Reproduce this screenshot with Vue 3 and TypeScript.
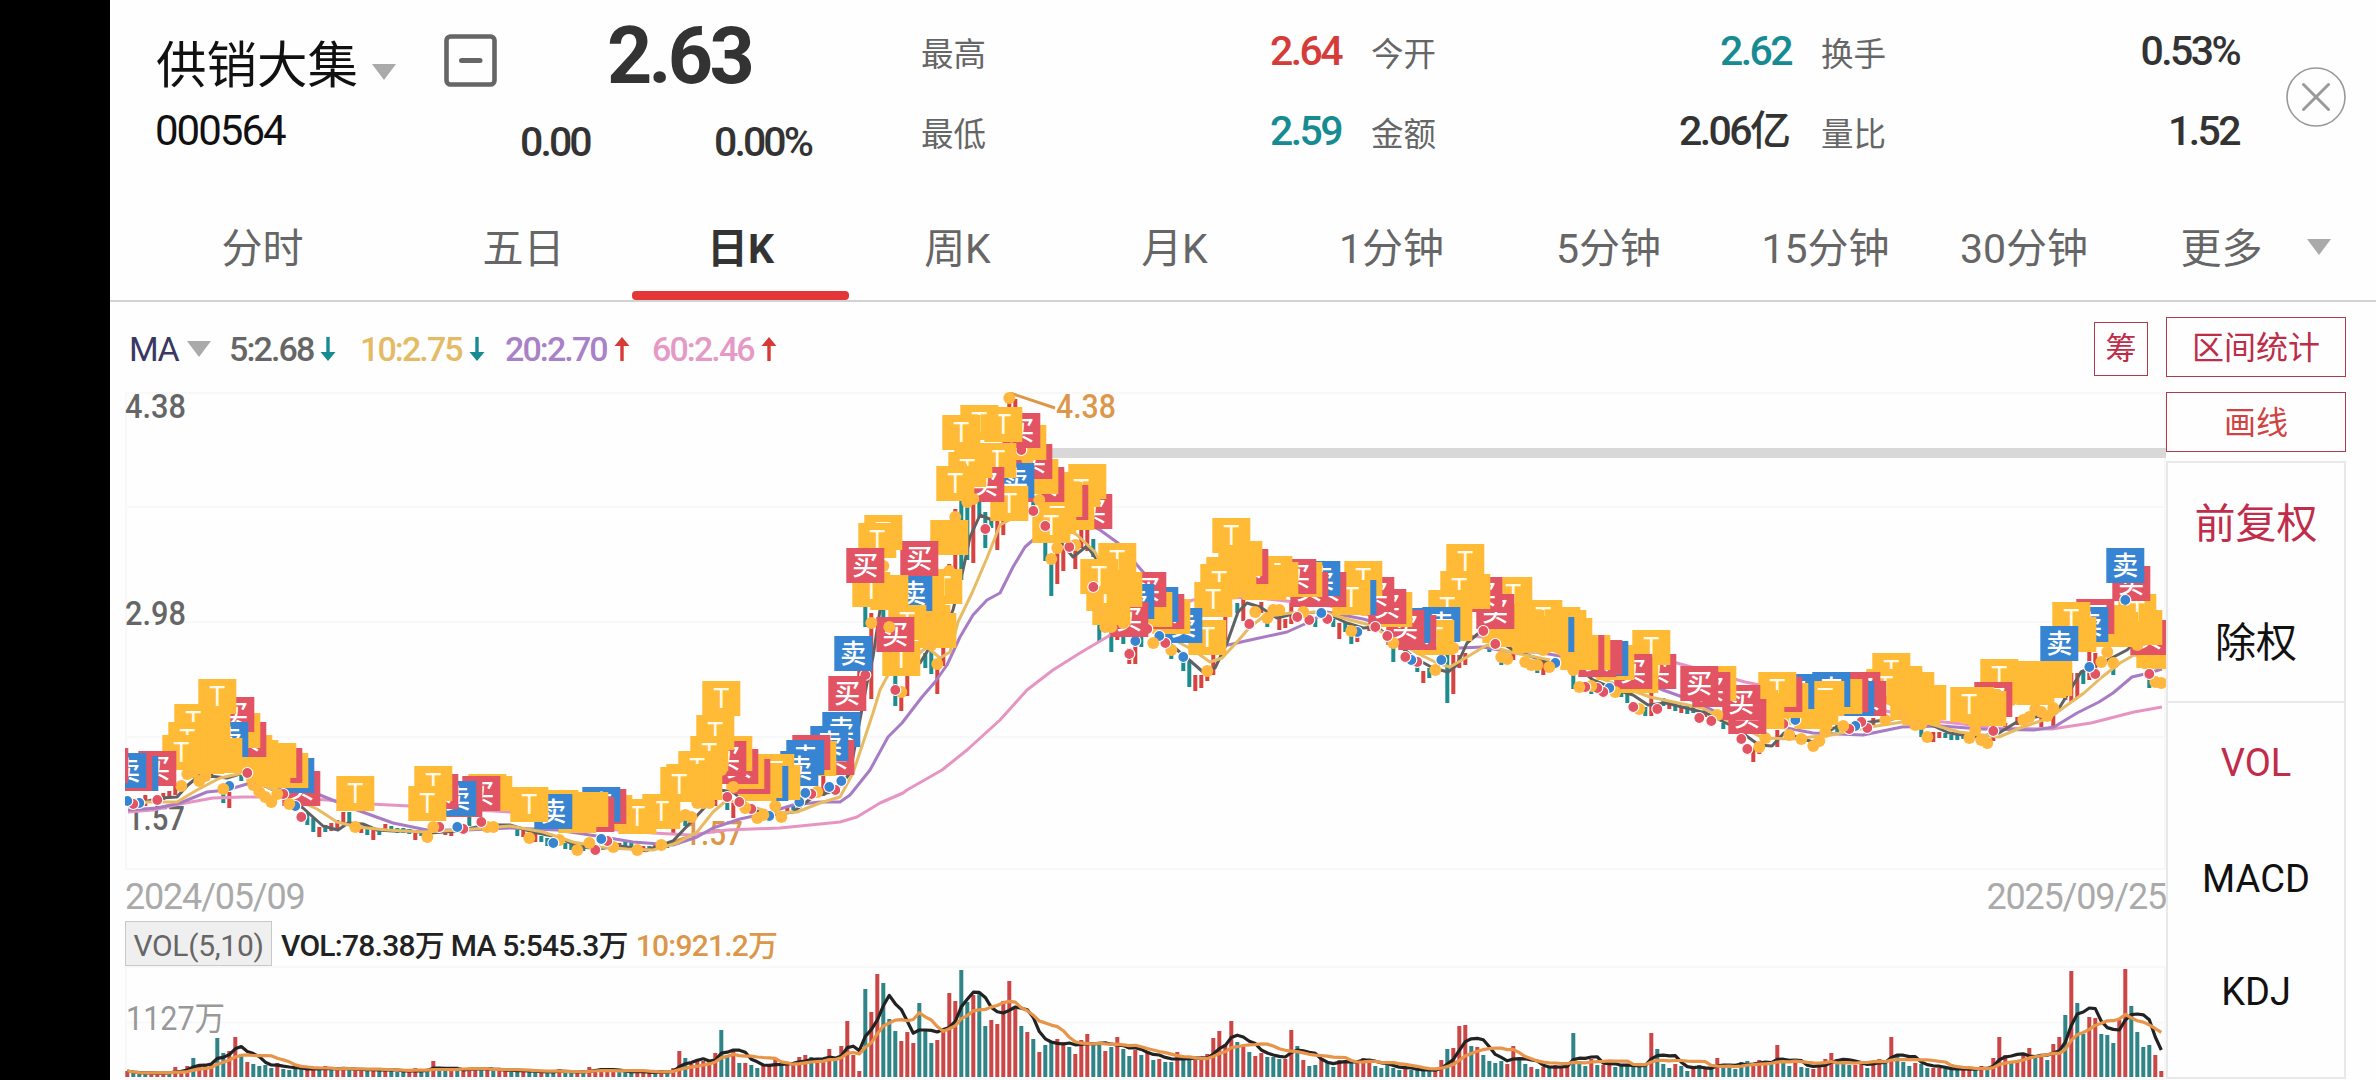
<template>
  <div class="screen">
    <div class="notch"></div>
    <div class="content">
      <header class="quote">
        <div class="stock">
          <div class="stock-name">
            <span>供销大集</span>
            <i class="caret"></i>
          </div>
          <div class="stock-code">000564</div>
        </div>
        <svg class="minus-icon" viewBox="0 0 53 53">
          <rect x="2.5" y="2.5" width="48" height="48" rx="4" fill="none" stroke="#666" stroke-width="4.6" />
          <path d="M17.500 26.500H36" stroke="#666" stroke-width="5" stroke-linecap="round" />
        </svg>
        <div class="price">
          <div class="price-now">2.63</div>
          <div class="price-change">
            <span>0.00</span>
            <span>0.00%</span>
          </div>
        </div>
        <div class="stats">
          <div v-for="item in stats" :key="item.label" class="stat">
            <span class="stat-label">{{ item.label }}</span>
            <span class="stat-value" :class="item.color">{{ item.value }}<b v-if="item.unit">{{ item.unit }}</b></span>
          </div>
        </div>
        <svg class="close-icon" viewBox="0 0 60 60">
          <circle cx="30" cy="30" r="29" fill="none" stroke="#999" stroke-width="1.6" />
          <path d="M17.500 17.500L42.500 42.500M42.500 17.500L17.500 42.500" stroke="#999" stroke-width="3" stroke-linecap="round" />
        </svg>
      </header>

      <nav class="tabs">
        <div
          v-for="tab in tabs"
          :key="tab"
          class="tab"
          :class="{ active: tab === activeTab }"
          @click="activeTab = tab"
        >
          <span>{{ tab }}</span>
        </div>
        <i class="caret more-caret"></i>
      </nav>

      <div class="body">
        <section class="chart">
          <div class="ma-row">
            <span class="ma-name">MA</span>
            <i class="caret"></i>
            <span v-for="ma in maList" :key="ma.text" class="ma" :class="ma.cls">
              {{ ma.text }}
              <svg class="arrow" :class="{ up: ma.up }" viewBox="0 0 16 24">
                <path d="M6.300 0H9.700V15H15.500L8 24L0.500 15H6.300Z" :fill="ma.up ? '#d73a35' : '#168b92'" />
              </svg>
            </span>
            <span class="chip-btn">筹</span>
          </div>

          <svg class="price-svg" viewBox="125 392 2041 478">
            <g stroke="#f8f8f8" stroke-width="2">
              <path v-for="y in [393, 507, 622, 737, 869]" :key="y" :d="`M125 ${y}H2166`" />
              <path d="M126 392V869M2165 392V869" />
            </g>
            <rect x="1030" y="448" width="1136" height="10" fill="#d8d8d8" />
            <g class="axis" fill="#666">
              <text x="125" y="418" textLength="61" lengthAdjust="spacingAndGlyphs">4.38</text>
              <text x="125" y="625" textLength="61" lengthAdjust="spacingAndGlyphs">2.98</text>
              <text x="127" y="830" textLength="58" lengthAdjust="spacingAndGlyphs">1.57</text>
            </g>
            <g class="axis" fill="#dc974a">
              <text x="684" y="845" textLength="59" lengthAdjust="spacingAndGlyphs">1.57</text>
              <text x="1056" y="418" textLength="60" lengthAdjust="spacingAndGlyphs">4.38</text>
            </g>
            <path d="M645 851L688 837M1010 393L1055 408" stroke="#dc974a" stroke-width="3" />
            <!-- candles -->
            <rect
              v-for="c in candles"
              :key="c.n"
              :x="px(c.n) - 2"
              :y="c.top"
              width="4"
              :height="c.bottom - c.top"
              :fill="c.up ? '#d84340' : '#1d8c8f'"
            />
            <g fill="none" stroke-width="3" stroke-linejoin="round">
              <polyline v-for="l in priceLines" :key="l.color" :points="l.points" :stroke="l.color" />
            </g>
            <!-- trade marks: the earlier day lies on top -->
            <g v-for="m in marks" :key="m.n">
              <circle v-if="m.kind === 'T'" :cx="px(m.n)" :cy="m.dot" r="6" fill="#ffb83d" />
              <circle v-else :cx="px(m.n)" :cy="m.dot" r="5.500" :fill="markColor[m.kind]" stroke="#fff" stroke-width="1.200" />
              <rect :x="px(m.n) - 19" :y="m.top" width="38" height="35" :fill="markColor[m.kind]" />
              <template v-if="m.kind === 'T'">
                <text v-if="lettered.has(m.n)" class="mark-t" :x="px(m.n)" :y="m.top + 27">T</text>
              </template>
              <text v-else class="mark-zh" :x="px(m.n)" :y="m.top + 27">{{ m.kind === 'R' ? '买' : '卖' }}</text>
            </g>
          </svg>

          <div class="dates">
            <span>2024/05/09</span>
            <span>2025/09/25</span>
          </div>

          <div class="vol-row">
            <span class="vol-tag">VOL(5,10)</span>
            <span class="vol-text">VOL:78.38万 MA 5:545.3万</span>
            <span class="vol-ten">10:921.2万</span>
          </div>

          <svg class="vol-svg" viewBox="125 966 2041 114">
            <g stroke="#f8f8f8" stroke-width="2">
              <path d="M125 967H2166M125 1022.500H2166M125 1079H2166M126 966V1080M2165 966V1080" />
            </g>
            <text class="vol-axis" x="126" y="1030" textLength="99" lengthAdjust="spacingAndGlyphs">1127万</text>
            <rect
              v-for="(v, i) in volumes"
              :key="i"
              :x="px(i) - 2"
              :y="1077 - v.size"
              width="4"
              :height="v.size"
              :fill="v.up ? '#cb4644' : '#2f8487'"
            />
            <g fill="none" stroke-width="3.200" stroke-linejoin="round">
              <polyline :points="volumeMa(5)" stroke="#222" />
              <polyline :points="volumeMa(10)" stroke="#e8954a" />
            </g>
          </svg>
        </section>

        <aside class="side">
          <div class="side-btn">区间统计</div>
          <div class="side-btn draw">画线</div>
          <div class="menu">
            <div class="menu-group rights">
              <span class="on">前复权</span>
              <span>除权</span>
            </div>
            <div class="menu-group indicators">
              <span class="on">VOL</span>
              <span>MACD</span>
              <span>KDJ</span>
            </div>
          </div>
        </aside>
      </div>
    </div>
  </div>
</template>

<script setup lang="ts">
import { ref } from 'vue'

type Kind = 'T' | 'R' | 'B'

interface Mark {
  n: number
  top: number
  kind: Kind
  dot: number
}

interface Candle {
  n: number
  top: number
  bottom: number
  up: boolean
}

const stats: { label: string; value: string; unit?: string; color?: string }[] = [
  { label: '最高', value: '2.64', color: 'red' },
  { label: '今开', value: '2.62', color: 'green' },
  { label: '换手', value: '0.53%' },
  { label: '最低', value: '2.59', color: 'green' },
  { label: '金额', value: '2.06', unit: '亿' },
  { label: '量比', value: '1.52' },
]

const tabs = ['分时', '五日', '日K', '周K', '月K', '1分钟', '5分钟', '15分钟', '30分钟', '更多']
const activeTab = ref('日K')

const maList = [
  { text: '5:2.68', cls: 'ma5', up: false },
  { text: '10:2.75', cls: 'ma10', up: false },
  { text: '20:2.70', cls: 'ma20', up: true },
  { text: '60:2.46', cls: 'ma60', up: true },
]

const markColor: Record<Kind, string> = { T: '#ffba36', R: '#e25364', B: '#3785d2' }

const lettered = new Set([
  9, 10, 11, 15, 38, 50, 51, 67, 85, 89, 92, 95, 97, 98, 99, 108, 124, 125, 126, 129, 130, 135, 136, 138, 139,
  140, 142, 145, 146, 147, 154, 155, 159, 162, 163, 165, 180, 181, 182, 184, 191, 204, 206, 218, 220, 222, 223,
  231, 236, 254, 275, 283, 293, 294, 307, 312, 317, 324, 335,
])

// one trading day is 6 units wide
const px = (n: number) => 127.3 + n * 6

// day, badge top, kind, dot y
const marks: Mark[] = `
-3 748 R 800|0 753 B 801|1 756 R 804|2 756 B 803|5 751 R 800|9 735 T 786|10 722 T 774|11 704 T 772|12 733 T 781|13 739 T 776
14 713 T 765|15 679 T 760|16 738 T 789|17 722 B 786|18 697 R 750|19 713 T 760|20 722 R 773|21 735 T 785|22 740 T 792|23 748 T 797
24 752 T 802|25 743 T 794|26 748 R 794|27 753 T 804|28 758 B 806|29 771 R 817|38 776 T 827|50 786 T 837|51 766 T 827|52 774 R 827
55 781 B 827|56 782 R 829|59 776 R 822|60 774 T 827|61 776 T 827|67 787 T 838|71 794 B 843|72 790 T 840|75 798 T 850|77 792 T 843
78 797 R 850|79 787 B 839|80 789 R 841|81 795 T 847|85 799 T 850|89 794 T 845|92 767 T 817|93 764 T 815|94 764 T 817|95 751 T 803
96 765 T 803|97 736 T 803|98 715 T 780|99 681 T 770|100 741 R 797|101 736 T 787|102 749 R 802|103 754 T 808|104 759 R 809|105 766 T 818
106 763 T 815|107 766 B 816|108 754 T 806|109 765 T 817|112 751 B 802|113 740 B 793|114 735 R 794|115 741 T 792|117 726 B 787|118 740 R 790
119 712 B 781|120 676 R 700|121 636 B 660|123 548 R 675|124 572 T 623|125 523 T 560|126 515 T 566|127 575 T 627|128 617 R 690|129 641 T 692
130 605 T 660|131 576 B 620|132 541 R 600|133 576 T 620|134 605 T 645|135 613 T 664|136 569 T 610|137 520 T 571|138 466 T 517|139 415 T 467
140 452 T 502|141 443 T 499|142 405 T 460|143 467 R 529|145 443 T 480|146 407 T 450|147 486 T 398|148 463 B 490|149 413 R 450|150 425 T 460
151 444 R 511|152 459 T 500|153 467 R 526|154 508 T 559|155 499 T 548|156 482 T 530|157 485 R 547|158 495 T 545|159 472 T 520|160 464 T 510
161 494 R 587|162 559 T 610|163 576 T 627|164 590 T 627|165 543 T 600|166 572 T 623|167 602 R 654|168 584 B 641|170 572 R 629|171 592 T 643
172 587 B 636|173 594 R 643|174 599 T 650|176 608 B 657|180 620 T 671|181 582 T 630|182 564 T 610|183 557 T 600|184 518 T 570|185 553 T 580
186 541 T 590|187 549 R 624|188 562 T 612|189 565 T 590|190 565 T 618|191 556 T 610|192 562 T 610|195 559 R 617|196 562 T 612|197 572 R 620
199 561 B 613|200 572 R 619|204 580 T 631|205 580 B 632|206 561 T 610|208 577 R 627|210 589 R 636|211 592 T 643|213 610 R 657|214 608 B 660
215 615 R 662|218 620 T 670|219 607 B 660|220 590 T 640|221 606 T 648|222 571 T 620|223 544 T 600|224 574 T 600|226 577 R 631|228 594 R 644
229 608 T 657|230 612 T 659|231 577 T 630|232 612 T 640|233 610 T 662|234 618 T 665|235 616 T 665|236 600 T 650|237 617 T 667|238 617 B 663
239 607 T 650|240 610 T 650|241 618 T 670|242 635 T 687|243 635 R 687|244 635 T 686|245 642 R 688|246 640 R 692|247 641 B 688|248 645 T 692
251 654 R 707|252 658 T 709|254 630 T 680|255 654 R 709|262 666 R 718|264 672 R 721|265 666 T 715|269 685 R 739|270 699 R 749|272 690 T 747
273 694 T 738|275 672 T 715|276 677 R 724|277 683 T 735|278 674 B 720|279 690 T 739|281 694 T 746|282 690 T 741|283 681 T 732|284 672 B 715
286 679 T 726|287 677 R 729|288 681 B 726|289 672 R 722|290 681 R 728|293 669 T 720|294 653 T 700|296 666 T 715|297 685 T 715|298 672 T 725
299 690 T 724|300 685 T 737|307 687 T 738|308 687 T 730|309 689 T 740|310 691 T 743|311 682 R 731|312 659 T 700|314 662 T 700|316 666 T 720
317 661 T 717|318 670 T 709|319 663 T 712|320 663 T 716|321 661 T 708|322 626 B 660|324 602 T 640|325 617 T 640|327 607 B 667|328 599 R 674
329 612 T 662|330 605 T 652|331 612 T 663|332 612 T 640|333 548 B 600|334 566 R 631|335 594 T 645|336 610 T 640|337 620 R 674|338 633 T 682
339 634 T 683`
  .trim()
  .split(/[|\n]/)
  .map((row) => {
    const [n, top, kind, dot] = row.trim().split(' ')
    return { n: +n, top: +top, kind: kind as Kind, dot: +dot }
  })
  .reverse()

// day, top, bottom; a minus sign before the day means a falling candle
const candleRows = `
3 795 806,6 793 800,7 791 798,8 783 795,-11 768 778,14 770 778,-16 793 803,17 792 808,-19 772 781,-30 813 825,-31 818 832,32 827 837,-33 825 832
34 823 831,35 820 830,36 812 823,-37 812 822,39 826 833,-40 827 835,41 828 840,-42 829 835,43 824 832,-44 826 831,-45 828 833,-46 828 833,-47 829 834
48 830 840,-49 831 836,53 831 835,54 831 836,-57 816 826,-65 827 836,66 828 837,68 833 842,-69 836 842,-70 838 846,-73 843 849,-74 842 850,-76 843 851
82 843 850,-83 842 849,-84 843 850,86 846 852,-87 846 851,88 843 849,-90 842 848,91 825 833,-93 820 826,98 793 806,-100 803 810,101 803 818,110 807 813,-111 804 810
116 775 796,122 660 690,-123 607 627,124 613 699,-126 610 620,-128 676 706,129 690 711,130 676 696,-133 653 668,-134 645 674,135 660 694,136 647 666
137 564 575,138 509 570,-139 500 580,-140 507 560,141 503 563,-142 502 517,-143 512 548,-144 520 528,145 521 550,146 521 535,147 395 410,148 399 410
-151 502 508,-153 543 561,-154 560 596,155 553 584,156 547 571,158 550 569,159 530 548,160 530 551,-161 539 557,-162 610 641,-164 630 652,165 636 640
-166 635 644,167 648 664,168 643 664,-169 636 647,-174 647 659,-176 660 671,-177 660 687,178 675 691,179 675 688,180 673 681,181 655 675,183 617 640
-185 603 613,186 598 621,189 602 613,-190 620 627,192 618 630,193 619 628,194 600 624,-198 617 627,-201 619 627,202 623 639,-203 622 632,-204 635 644
205 636 642,207 623 631,-211 647 662,-215 663 672,216 671 683,-217 668 678,-220 655 703,221 655 694,222 655 668,223 653 665,-227 647 652,-229 657 665
231 650 660,-235 662 673,236 660 675,-241 675 689,-244 687 694,-249 692 697,-250 692 703,-253 707 716,254 687 716,-256 698 706,257 702 709,-258 703 711,259 707 713
-260 706 714,-261 707 713,263 710 717,-266 723 729,271 748 762,272 743 754,275 730 747,-285 724 732,291 718 726,-295 697 712,-299 727 737,301 732 742
302 732 738,-303 733 738,-304 735 740,-305 735 740,-306 734 739,-308 729 737,311 730 741,313 723 727,315 717 725,319 716 727,321 713 727,323 690 700,324 673 702,325 673 698
-326 670 684,327 652 680,328 653 672,330 643 652,-331 660 675,-337 677 688`

const candles: Candle[] = candleRows
  .trim()
  .split(/[,\n]/)
  .map((row) => {
    const [n, top, bottom] = row.trim().split(' ').map(Number)
    return { n: Math.abs(n), top, bottom, up: n > 0 }
  })

const priceLines = [
  {
    color: '#e695c3',
    points:
      '128,812 153,810 180,804 213,798 243,797 277,797 327,800 370,804 410,806 510,812 583,827 653,833 690,835 727,830 780,828 840,822 857,817 880,803 903,793 907,790 942,770 967,750 1000,720 1027,690 1053,670 1080,653 1107,637 1133,620 1193,600 1250,597 1330,606 1400,622 1467,636 1483,637 1560,638 1677,663 1745,682 1834,700 1895,713 1934,721 1963,724 1991,728 2052,729 2091,723 2134,712 2162,707',
  },
  {
    color: '#a87cc4',
    points:
      '128,810 157,808 180,803 207,792 227,790 247,784 277,787 297,792 320,795 357,810 393,823 427,830 467,830 510,828 557,830 603,837 633,842 673,845 697,837 713,828 740,819 767,813 793,805 820,802 840,802 850,795 870,770 888,737 902,723 922,697 935,682 947,665 960,637 973,615 987,600 1000,593 1013,567 1025,547 1033,540 1067,515 1100,530 1118,543 1150,580 1183,613 1200,640 1228,645 1250,640 1287,632 1307,623 1327,612 1363,619 1403,630 1433,643 1460,648 1483,647 1510,652 1537,652 1583,660 1633,677 1663,690 1691,700 1727,717 1781,727 1813,733 1863,735 1902,727 1941,726 1981,729 2034,730 2054,727 2077,713 2099,702 2113,693 2132,677 2149,673 2162,669',
  },
  {
    color: '#5f6162',
    points:
      '128,806 160,798 177,797 188,785 200,775 227,778 243,773 263,785 283,795 303,808 323,826 338,830 348,823 363,824 377,830 393,831 410,831 430,833 457,831 487,825 510,825 533,832 557,837 577,846 597,849 620,846 647,850 673,841 690,823 707,805 720,790 733,792 753,810 773,815 793,812 813,797 837,790 850,773 858,730 867,683 873,657 880,610 893,600 910,643 920,663 928,650 942,635 953,610 963,570 970,537 980,515 992,520 1010,500 1030,480 1053,533 1073,557 1087,546 1097,560 1110,600 1133,627 1153,630 1187,658 1203,672 1215,668 1227,643 1238,612 1247,603 1260,607 1277,618 1297,613 1323,612 1347,623 1363,628 1377,627 1393,640 1413,657 1433,668 1448,672 1457,665 1467,643 1480,632 1497,640 1513,650 1533,657 1550,663 1573,663 1593,680 1617,690 1633,695 1648,705 1666,703 1706,713 1734,727 1759,745 1772,746 1784,733 1813,742 1834,728 1863,723 1899,718 1927,723 1949,733 1977,737 1999,733 2020,720 2056,713 2066,697 2081,672 2102,663 2127,650 2138,640 2156,660',
  },
  {
    color: '#e8bb62',
    points:
      '128,806 147,802 177,802 197,790 220,778 243,773 267,787 297,800 317,809 337,822 357,827 387,830 423,832 460,830 510,826 543,832 573,842 600,847 627,849 653,850 677,843 697,832 713,812 727,800 740,803 773,813 797,812 820,803 840,797 853,773 865,737 873,713 880,690 888,675 905,665 927,647 940,658 950,652 958,622 972,593 987,558 1000,525 1033,507 1077,535 1095,552 1113,587 1150,627 1193,650 1210,662 1222,658 1237,642 1250,627 1263,617 1290,613 1323,612 1350,620 1370,625 1390,637 1417,653 1437,663 1450,667 1467,657 1487,645 1510,652 1550,660 1593,675 1617,685 1650,697 1702,708 1727,720 1763,738 1791,739 1831,735 1870,727 1916,720 1959,732 1999,737 2020,728 2049,718 2070,703 2084,693 2102,677 2120,663 2134,655 2156,658',
  },
]

// bar height, r = rising day, g = falling day
const volumes = `
6r 4g 3g 4g 4r 4r 4r 4g 10r 6r 11r 19g 12r 11r 12r 39g 24g 26r 40r 23g 15r 13g 11g 12g 9g 14r 8g 7g 9g 8g
9r 7r 8g 11r 7g 8r 9r 7g 8r 6r 7g 9r 6g 8r 7g 5g 5g 6r 9r 6g 7g 16r 6g 8g 6r 7g 9r 8r 10r 7g
8r 6g 7r 6r 7g 6g 6r 5g 5g 5r 6g 5g 8r 4g 4g 5r 5g 10r 8r 9r 5r 5r 7g 5g 4g 7r 4r 4r 4g 7r
5g 9r 26r 19g 13r 17r 16r 15r 24r 47g 22g 27r 14g 14r 12g 9g 11r 12r 18r 13g 12r 13r 20r 22r 20g 14r 15r 28r 17g 31r
56r 22r 6r 88g 65r 103r 94g 58g 46g 36r 45r 34r 74g 46g 34g 37r 47r 84r 76r 107g 75g 82r 83g 51g 57r 53r 76r 96r 68r 51g
45r 38g 25r 32g 35g 38r 35r 30g 23r 37r 43r 32g 33g 26r 30g 40r 28g 21g 27r 22g 26r 17g 18r 15g 15g 25r 18g 19g 17r 17r
23r 39r 46r 33r 56r 35g 30r 25g 21r 24r 20g 20g 18g 18r 47r 31g 17r 11g 12g 19r 15g 10g 17r 16r 17g 16r 19r 16r 11g 9g
13g 9g 7g 9r 7g 7g 6g 6g 8r 17r 28g 29r 51r 52r 31g 30r 22g 16g 14g 16g 13r 31r 18g 13g 10r 8g 10r 9g 12r 11r
11r 44g 16g 11g 18r 12g 12r 14r 10g 11g 12g 11g 12g 12g 44r 28g 13g 9g 13r 11g 6g 8r 12g 9r 8g 19r 11g 12g 8g 15g
16g 13r 17r 13r 13g 32r 14g 11g 15r 10g 9g 8r 14r 18r 24r 18g 14g 12g 12r 16r 9g 16r 18r 14g 40r 22g 15g 11g 14r 13g
9g 9r 9r 8g 7g 8g 8r 8r 8g 11r 8g 19r 40r 22r 16g 16r 22r 29r 19g 22r 17g 33r 40r 62g 106r 74g 43g 60r 59r 43g
42g 34g 57r 108r 71g 45g 30g 32g 22r 6r`
  .trim()
  .split(/\s+/)
  .map((v) => ({ size: parseInt(v), up: v.endsWith('r') }))

function volumeMa(days: number): string {
  return volumes
    .map((_, i) => {
      const part = volumes.slice(Math.max(0, i - days + 1), i + 1)
      const avg = part.reduce((sum, v) => sum + v.size, 0) / part.length
      return `${px(i)},${(1077 - avg).toFixed(1)}`
    })
    .join(' ')
}
</script>

<style>
body {
  background: #fefefe;
  overflow: hidden;
}
</style>

<style scoped>
.screen {
  display: flex;
  width: 2376px;
  height: 1080px;
  overflow: hidden;
  font-family: Roboto, "Noto Sans CJK SC", sans-serif;
  color: #333;
  white-space: nowrap;
}

.notch {
  width: 110px;
  background: #000;
}

.content {
  width: 2266px;
}

.quote {
  display: flex;
  height: 194px;
  padding-left: 46px;
}

.stock {
  width: 288px;
  padding-top: 30px;
  color: #111;
}

.stock-name {
  display: flex;
  align-items: center;
  height: 62px;
  font-size: 50.5px;
}

.caret {
  flex: none;
  border: 12px solid transparent;
  border-top: 16px solid #aaa;
  border-bottom: 0;
}

.stock-name .caret {
  margin: 22px 0 0 14px;
}

.stock-code {
  margin-top: 16px;
  margin-left: -1px;
  font-size: 42px;
  line-height: 46px;
  letter-spacing: -2px;
}

.minus-icon {
  flex: none;
  width: 53px;
  height: 53px;
  margin-top: 34px;
}

.price {
  width: 291px;
  margin-left: 23px;
}

.price-now {
  padding: 9px 0 0 87px;
  font-size: 79px;
  line-height: 94px;
  font-weight: 700;
  letter-spacing: -3.7px;
}

.price-change {
  display: flex;
  justify-content: space-between;
  margin-top: 16px;
  font-size: 41px;
  line-height: 46px;
  font-weight: 500;
  letter-spacing: -2.9px;
}

.stats {
  display: grid;
  grid-template-columns: 420px 420px 418px;
  grid-auto-rows: 80px;
  column-gap: 30px;
  margin: 11px 0 0 110px;
}

.stat {
  display: flex;
  align-items: center;
  justify-content: space-between;
}

.stat-label {
  font-size: 32.500px;
  color: #666;
}

.stat-value {
  font-size: 41px;
  line-height: 48px;
  font-weight: 500;
  letter-spacing: -2.6px;
}

.stat-value b {
  font-weight: 500;
  line-height: 0;
  letter-spacing: 0;
}

.red {
  color: #d53c39;
}

.green {
  color: #168b92;
}

.close-icon {
  flex: none;
  width: 60px;
  height: 60px;
  margin: 67px 0 0 47px;
}

.tabs {
  display: grid;
  grid-template-columns: 305px 217px 217px 217px 217px 217px 217px 217px 180px 215px 30px;
  height: 106px;
  border-bottom: 2px solid #d2d2d2;
}

.tab {
  display: flex;
  justify-content: center;
  height: 97px;
  border-bottom: 9px solid transparent;
  font-size: 41px;
  line-height: 111px;
  color: #666;
}

.tab.active {
  position: relative;
  font-weight: 700;
  color: #333;
}

.tab.active::after {
  content: '';
  position: absolute;
  left: 0;
  bottom: -9px;
  width: 217px;
  height: 9px;
  border-radius: 4px;
  background: #e43636;
}

.more-caret {
  width: 0;
  height: 0;
  margin: 45px 0 0 -22px;
}

.body {
  display: flex;
}

.chart {
  width: 2041px;
  padding-left: 15px;
}

.ma-row {
  display: flex;
  align-items: center;
  height: 90px;
  padding: 3px 18px 0 4px;
  font-size: 34px;
  box-sizing: border-box;
}

.ma-name {
  width: 58px;
  color: #3a3763;
  letter-spacing: -1.5px;
}

.ma {
  display: flex;
  align-items: center;
  box-sizing: border-box;
  font-weight: 500;
  letter-spacing: -1.9px;
}

.arrow {
  width: 16px;
  height: 24px;
  margin-left: 7px;
}

.arrow.up {
  transform: rotate(180deg);
}

.ma5 {
  width: 149px;
  padding-left: 18px;
  color: #666;
}

.ma10 {
  width: 145px;
  color: #e4bb64;
}

.ma20 {
  width: 147px;
  color: #a981c8;
}

.ma60 {
  color: #e59ac6;
}

.chip-btn {
  width: 54px;
  height: 54px;
  margin-left: auto;
  box-sizing: border-box;
  border: 1.5px solid #ad3a4d;
  font-size: 31px;
  line-height: 52px;
  text-align: center;
  color: #bd2d48;
}

.price-svg {
  display: block;
  width: 2041px;
  height: 478px;
}

.axis {
  font-size: 34px;
  font-weight: 500;
}

.mark-t {
  font-size: 27px;
  text-anchor: middle;
  fill: #fffbe8;
}

.mark-zh {
  font-size: 26px;
  font-weight: 500;
  text-anchor: middle;
  fill: #fff;
}

.dates {
  display: flex;
  justify-content: space-between;
  height: 51px;
  font-size: 36px;
  line-height: 55px;
  letter-spacing: -1.200px;
  color: #aaa;
}

.vol-row {
  display: flex;
  height: 45px;
  font-size: 30px;
  line-height: 49px;
  font-weight: 500;
  color: #222;
}

.vol-tag {
  width: 147px;
  box-sizing: border-box;
  border: 1px solid #c8c8c8;
  background: #efefef;
  font-weight: 400;
  line-height: 48px;
  letter-spacing: -0.300px;
  text-align: center;
  color: #666;
}

.vol-text {
  margin-left: 9px;
  letter-spacing: -0.750px;
}

.vol-ten {
  margin-left: 8px;
  letter-spacing: -0.800px;
  color: #dc974a;
}

.vol-svg {
  display: block;
  width: 2041px;
  height: 114px;
}

.vol-axis {
  font-size: 33px;
  fill: #999;
}

.side {
  width: 180px;
  padding-top: 15px;
}

.side-btn {
  height: 60px;
  margin-bottom: 15px;
  box-sizing: border-box;
  border: 1.5px solid #ad3a4d;
  font-size: 32px;
  line-height: 60px;
  text-align: center;
  color: #bd2d48;
}

.side-btn.draw {
  margin-bottom: 9px;
  color: #cf4443;
}

.menu {
  height: 618px;
  box-sizing: border-box;
  border: 2px solid #e8e8e8;
  color: #111;
}

.menu-group {
  display: grid;
  align-items: center;
  justify-items: center;
  font-size: 41px;
}

.rights {
  grid-template-rows: 114px 124px;
  height: 238px;
  border-bottom: 2px solid #e8e8e8;
}

.indicators {
  grid-template-rows: 120px 112px 114px;
  font-size: 38px;
}

.on {
  color: #c02c49;
}
</style>
